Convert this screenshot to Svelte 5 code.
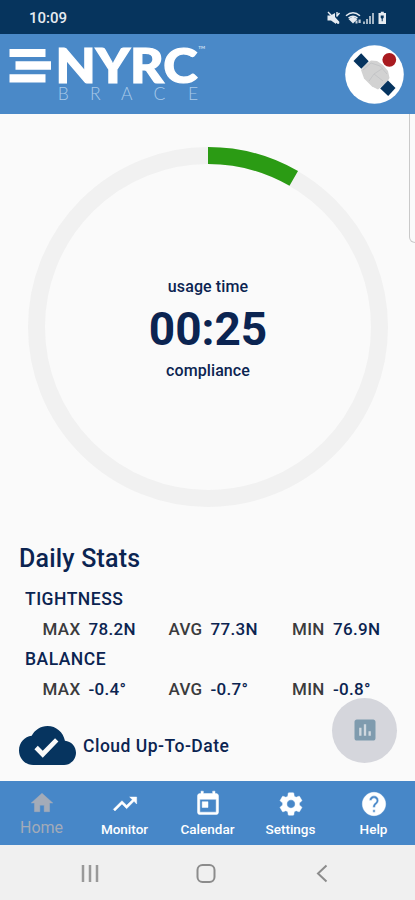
<script lang="ts">
  type Stat = { label: string; value: string };
  type Group = { title: string; stats: Stat[] };

  const groups: Group[] = [
    {
      title: "TIGHTNESS",
      stats: [
        { label: "MAX", value: "78.2N" },
        { label: "AVG", value: "77.3N" },
        { label: "MIN", value: "76.9N" },
      ],
    },
    {
      title: "BALANCE",
      stats: [
        { label: "MAX", value: "-0.4°" },
        { label: "AVG", value: "-0.7°" },
        { label: "MIN", value: "-0.8°" },
      ],
    },
  ];

  const tabs = [
    { name: "Home", icon: "M10 20v-6h4v6h5v-8h3L12 3 2 12h3v8z" },
    {
      name: "Monitor",
      icon: "M16 6l2.29 2.29-4.88 4.88-4-4L2 16.59 3.41 18l6-6 4 4 6.3-6.29L22 12V6z",
    },
    {
      name: "Calendar",
      icon: "M19 3h-1V1h-2v2H8V1H6v2H5c-1.11 0-1.99.9-1.99 2L3 19c0 1.1.89 2 2 2h14c1.1 0 2-.9 2-2V5c0-1.1-.9-2-2-2zm0 16H5V8h14v11zM7 10h5v5H7z",
    },
    {
      name: "Settings",
      icon: "M19.14 12.94c.04-.3.06-.61.06-.94 0-.32-.02-.64-.07-.94l2.03-1.58c.18-.14.23-.41.12-.61l-1.92-3.32c-.12-.22-.37-.29-.59-.22l-2.39.96c-.5-.38-1.03-.7-1.62-.94l-.36-2.54c-.04-.24-.24-.41-.48-.41h-3.84c-.24 0-.43.17-.47.41l-.36 2.54c-.59.24-1.13.57-1.62.94l-2.39-.96c-.22-.08-.47 0-.59.22L2.74 8.87c-.12.21-.08.47.12.61l2.03 1.58c-.05.3-.09.63-.09.94s.02.64.07.94l-2.03 1.58c-.18.14-.23.41-.12.61l1.92 3.32c.12.22.37.29.59.22l2.39-.96c.5.38 1.03.7 1.62.94l.36 2.54c.05.24.24.41.48.41h3.84c.24 0 .44-.17.47-.41l.36-2.54c.59-.24 1.13-.56 1.62-.94l2.39.96c.22.08.47 0 .59-.22l1.92-3.32c.12-.22.07-.47-.12-.61l-2.01-1.58zM12 15.6c-1.98 0-3.6-1.62-3.6-3.6s1.62-3.6 3.6-3.6 3.6 1.62 3.6 3.6-1.62 3.6-3.6 3.6z",
    },
    {
      name: "Help",
      icon: "M12 2C6.48 2 2 6.48 2 12s4.48 10 10 10 10-4.48 10-10S17.52 2 12 2zm1 17h-2v-2h2v2zm2.07-7.75l-.9.92C13.45 12.9 13 13.5 13 15h-2v-.5c0-1.1.45-2.1 1.17-2.83l1.24-1.26c.37-.36.59-.86.59-1.41 0-1.1-.9-2-2-2s-2 .9-2 2H8c0-2.21 1.79-4 4-4s4 1.79 4 4c0 .88-.36 1.68-.93 2.25z",
    },
  ];

  let active = "Home";
  let compliance = 30 / 360;

  const radius = 171.5;
  const length = 2 * Math.PI * radius;
</script>

<div class="screen">
  <div class="status">
    <span class="clock">10:09</span>
    <svg class="status-icons" width="62" height="14" viewBox="0 0 62 14">
      <g fill="#e6ebf1">
        <path d="M.5 4.500h3l4.500-2.500v4l4.500 5-1.500 2-2-1.200V13L4 9.500H.5z" />
        <path d="M1 1l11 11.500M10 1v4.500M12.500 2l-3 3.500" stroke="#e6ebf1" stroke-width="1.400" />
        <path d="M21.500 8l4.500-2.500L30.500 8 26 12.500z" />
        <path d="M28.500 9.500h2v3h-2zM31.500 8.500h2.200v3.500h-2.200z" opacity=".85" />
        <path d="M36 10.500h2v2.500h-2zM39 8h2v5h-2zM42 5h2v8h-2zM45 2h2v11h-2z" opacity=".7" />
        <path d="M51.500 2h2.300V.8h3V2h2.200v11h-7.500z" />
      </g>
      <path d="M19 4.800q7-6 14 0M21.500 7q4.500-3.500 9 0" fill="none" stroke="#e6ebf1" stroke-width="1.500" />
      <path d="M53.700 4.500h3v2.200l-1 1v2.500h-1V7.700l-1-1z" fill="#06345d" />
    </svg>
  </div>

  <header>
    <svg class="logo" width="205" height="70" viewBox="0 0 205 70">
      <path d="M9.500 11h36v8h-36zM15.500 23.300H51v8.400H15.500zM9.500 36.300h36v8.200h-36z" fill="#fff" />
      <text class="name" y="44.500" x="55.500" textLength="142" lengthAdjust="spacingAndGlyphs">NYRC</text>
      <text class="tm" x="198" y="15">™</text>
      <text class="sub" y="62" x="57.700 90 121 153.500 188">BRACE</text>
    </svg>
    <svg class="avatar" width="59" height="59" viewBox="0 0 59 59">
      <circle cx="29.500" cy="29.500" r="29.300" fill="#fff" />
      <path d="M16 25l4-5 6-4.500 6 .5 6 4 5 6 1.500 7-2.500 4-9 7.500-6-3-8-8z" fill="#d2d2d2" />
      <path d="M18 25l8-7 9 3 7 8M24 36l5-7 9-6M29 29l9 7" fill="none" stroke="#c4c5c7" />
      <path d="M16.200 8.300l7.500 8-7.400 7.500L8.500 16z" fill="#06345f" />
      <path d="M43 35.500l7.500 7.500-7.300 8-8-7.500z" fill="#06345f" />
      <circle cx="44.300" cy="14.800" r="6.900" fill="#a91b20" />
    </svg>
  </header>

  <main>
    <div class="edge-panel"></div>

    <section class="gauge">
      <svg width="360" height="360" viewBox="0 0 360 360">
        <g fill="none" stroke-width="17" transform="rotate(-90 180 180)">
          <circle cx="180" cy="180" r={radius} stroke="#f1f1f1" />
          <circle
            cx="180"
            cy="180"
            r={radius}
            stroke="#2b9b14"
            stroke-dasharray="{length * compliance} {length}"
          />
        </g>
      </svg>
      <div class="reading">
        <span class="caption">usage time</span>
        <strong>00:25</strong>
        <span class="caption">compliance</span>
      </div>
    </section>

    <section class="stats">
      <h2>Daily Stats</h2>
      {#each groups as group}
        <h3>{group.title}</h3>
        <div class="row">
          {#each group.stats as stat}
            <span class="label">{stat.label}</span>
            <span class="value">{stat.value}</span>
          {/each}
        </div>
      {/each}
    </section>

    <div class="cloud">
      <svg width="57" height="39" viewBox="0 4 24 16" preserveAspectRatio="none">
        <path
          fill="#06345f"
          d="M19.350 10.040C18.670 6.590 15.640 4 12 4 9.110 4 6.600 5.640 5.350 8.040 2.340 8.360 0 10.910 0 14c0 3.310 2.690 6 6 6h13c2.760 0 5-2.240 5-5 0-2.640-2.050-4.780-4.650-4.960zM10 17l-3.500-3.500 1.410-1.410L10 14.170 15.180 9l1.410 1.410L10 17z"
        />
      </svg>
      <span>Cloud Up-To-Date</span>
    </div>

    <button class="fab" aria-label="Statistics">
      <svg width="28" height="28" viewBox="0 0 24 24">
        <path d="M4 4h16v16H4z" fill="#d0d8df" />
        <path
          fill="#7f9bae"
          d="M19 3H5c-1.100 0-2 .9-2 2v14c0 1.100.9 2 2 2h14c1.100 0 2-.9 2-2V5c0-1.100-.9-2-2-2zM9 17H7v-7h2v7zm4 0h-2V7h2v10zm4 0h-2v-4h2v4z"
        />
      </svg>
    </button>
  </main>

  <nav>
    {#each tabs as tab}
      <button class="tab" class:active={tab.name === active} on:click={() => (active = tab.name)}>
        <svg viewBox="0 0 24 24"><path d={tab.icon} /></svg>
        <span>{tab.name}</span>
      </button>
    {/each}
  </nav>

  <footer>
    <svg width="415" height="55" viewBox="0 0 415 55" fill="none" stroke="#8c8c8c" stroke-width="2">
      <path d="M83 20v17M90 20v17M97 20v17" stroke-width="2.500" stroke="#999" />
      <rect x="197.500" y="20" width="17" height="17" rx="5" />
      <path d="M326.500 20.500l-8.500 8 8.500 8" />
    </svg>
  </footer>
</div>

<style>
  :global(body) {
    background: #fafafa;
  }
  .screen {
    width: 415px;
    height: 900px;
    display: flex;
    flex-direction: column;
    overflow: hidden;
    background: #fafafa;
    color: #0b2451;
    font-family: Roboto, sans-serif;
    font-weight: 500;
  }
  .screen > * {
    flex-shrink: 0;
  }
  .status {
    height: 34px;
    box-sizing: border-box;
    display: flex;
    justify-content: space-between;
    align-items: center;
    padding: 2px 26px 0 29px;
    background: #06345d;
  }
  .clock {
    color: #e6ebf1;
    font-size: 15px;
  }
  header {
    height: 80px;
    display: flex;
    justify-content: space-between;
    padding-right: 11px;
    background: #4a89c8;
  }
  .logo {
    margin-top: 4px;
    overflow: visible;
  }
  .logo text {
    fill: #fff;
    font-family: Lato, sans-serif;
  }
  .logo .name {
    font-size: 48px;
    font-weight: 900;
    stroke: #fff;
    stroke-width: 1.2px;
  }
  .logo .sub {
    font-size: 17.5px;
    font-weight: 300;
    fill: #a9c9e8;
  }
  .logo .tm {
    font-size: 10px;
    fill: #c5daee;
  }
  .avatar {
    margin-top: 10.5px;
  }
  main {
    position: relative;
    height: 666.5px;
  }
  .edge-panel {
    position: absolute;
    right: -6px;
    top: 0;
    width: 10px;
    height: 128px;
    border: 1.5px solid #c9c9c9;
    border-top: 0;
    border-radius: 0 0 5px 6px;
    background: #fafafa;
  }
  .gauge {
    display: grid;
    width: 360px;
    height: 360px;
    margin: 0 28px;
    padding-top: 33px;
  }
  .gauge > * {
    grid-area: 1 / 1;
  }
  .reading {
    display: flex;
    flex-direction: column;
    align-items: center;
    padding-top: 130px;
  }
  .caption {
    font-size: 16px;
    line-height: 20px;
    letter-spacing: 0.1px;
  }
  strong {
    font-size: 46px;
    line-height: 64px;
    font-weight: 700;
  }
  .stats {
    padding: 35px 19px 0;
  }
  h2 {
    margin: 0 0 8px;
    font-size: 25px;
    line-height: 34px;
    font-weight: 500;
    letter-spacing: 0.2px;
  }
  h3 {
    margin: 0 0 0 6px;
    font-size: 17.5px;
    line-height: 30px;
    font-weight: 500;
    letter-spacing: 0.5px;
  }
  .row {
    display: grid;
    grid-template-columns: 46px 80px 42px 81.5px 41px auto;
    padding-left: 23.5px;
    font-size: 17px;
    line-height: 30px;
    letter-spacing: 0.3px;
  }
  .label {
    color: #3b3b3d;
  }
  .cloud {
    display: flex;
    align-items: center;
    gap: 7px;
    margin: 22px 0 0 19px;
    font-size: 17.5px;
    letter-spacing: 0.5px;
  }
  .fab {
    position: absolute;
    right: 18px;
    bottom: 18px;
    width: 65px;
    height: 65px;
    display: grid;
    place-items: center;
    padding: 0;
    border: 0;
    border-radius: 50%;
    background: #d5d6dc;
  }
  nav {
    height: 64.5px;
    display: grid;
    grid-template-columns: repeat(5, 1fr);
    background: #4787c8;
  }
  .tab {
    display: flex;
    flex-direction: column;
    align-items: center;
    padding: 9px 0 0;
    border: 0;
    background: none;
    color: #fff;
    font: 500 13.5px/20px Roboto, sans-serif;
  }
  .tab svg {
    width: 28px;
    height: 28px;
    fill: currentColor;
    stroke: currentColor;
    stroke-width: 0.4px;
  }
  .tab span {
    margin-top: 1px;
  }
  .tab.active {
    color: #a3abb8;
    font-size: 16px;
    font-weight: 400;
  }
  .tab.active svg {
    width: 26px;
    height: 26px;
    margin-bottom: 1px;
  }
  footer {
    height: 55px;
    background: #f0f0f0;
  }
  footer svg {
    display: block;
  }
</style>
